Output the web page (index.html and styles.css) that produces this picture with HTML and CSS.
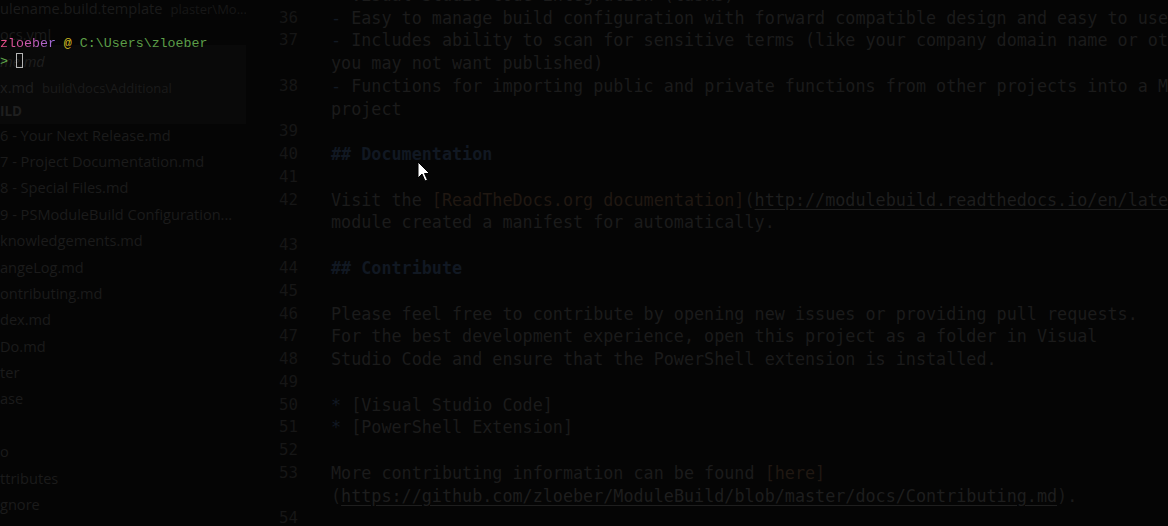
FILE: index.html
```html
<!DOCTYPE html>
<html lang="en">
<head>
<meta charset="utf-8">
<title>ModuleBuild README</title>
<link rel="stylesheet" href="styles.css">
</head>
<body>
<div class="screen">
  <aside class="sidebar">
    <div class="row"><span>ulename.build.template</span><span class="desc">plaster\Mo...</span></div>
    <div class="row">ocs.yml</div>
    <div class="row preview">me.md</div>
    <div class="row"><span>x.md</span><span class="desc">build\docs\Additional</span></div>
    <div class="row section">ILD</div>
    <div class="row">6 - Your Next Release.md</div>
    <div class="row">7 - Project Documentation.md</div>
    <div class="row">8 - Special Files.md</div>
    <div class="row">9 - PSModuleBuild Configuration...</div>
    <div class="row">knowledgements.md</div>
    <div class="row">angeLog.md</div>
    <div class="row">ontributing.md</div>
    <div class="row">dex.md</div>
    <div class="row">Do.md</div>
    <div class="row">ter</div>
    <div class="row">ase</div>
    <div class="row"></div>
    <div class="row">o</div>
    <div class="row">ttributes</div>
    <div class="row">gnore</div>
    <div class="row"></div>
  </aside>

  <main class="editor">
    <div class="line"><span class="ln">35</span><span class="code"><span class="bullet">-</span> Visual Studio Code integration (tasks)</span></div>
    <div class="line"><span class="ln">36</span><span class="code"><span class="bullet">-</span> Easy to manage build configuration with forward compatible design and easy to use</span></div>
    <div class="line"><span class="ln">37</span><span class="code"><span class="bullet">-</span> Includes ability to scan for sensitive terms (like your company domain name or other terms</span></div>
    <div class="line"><span class="ln"></span><span class="code">you may not want published)</span></div>
    <div class="line"><span class="ln">38</span><span class="code"><span class="bullet">-</span> Functions for importing public and private functions from other projects into a ModuleBuild</span></div>
    <div class="line"><span class="ln"></span><span class="code">project</span></div>
    <div class="line"><span class="ln">39</span><span class="code"></span></div>
    <div class="line"><span class="ln">40</span><span class="code heading">## Documentation</span></div>
    <div class="line"><span class="ln">41</span><span class="code"></span></div>
    <div class="line"><span class="ln">42</span><span class="code">Visit the <span class="label">[ReadTheDocs.org documentation]</span>(<span class="url">http://modulebuild.readthedocs.io/en/latest/</span>) for more</span></div>
    <div class="line"><span class="ln"></span><span class="code">module created a manifest for automatically.</span></div>
    <div class="line"><span class="ln">43</span><span class="code"></span></div>
    <div class="line"><span class="ln">44</span><span class="code heading">## Contribute</span></div>
    <div class="line"><span class="ln">45</span><span class="code"></span></div>
    <div class="line"><span class="ln">46</span><span class="code">Please feel free to contribute by opening new issues or providing pull requests.</span></div>
    <div class="line"><span class="ln">47</span><span class="code">For the best development experience, open this project as a folder in Visual</span></div>
    <div class="line"><span class="ln">48</span><span class="code">Studio Code and ensure that the PowerShell extension is installed.</span></div>
    <div class="line"><span class="ln">49</span><span class="code"></span></div>
    <div class="line"><span class="ln">50</span><span class="code"><span class="bullet">*</span> [Visual Studio Code]</span></div>
    <div class="line"><span class="ln">51</span><span class="code"><span class="bullet">*</span> [PowerShell Extension]</span></div>
    <div class="line"><span class="ln">52</span><span class="code"></span></div>
    <div class="line"><span class="ln">53</span><span class="code">More contributing information can be found <span class="label">[here]</span></span></div>
    <div class="line"><span class="ln"></span><span class="code">(<span class="url">https://github.com/zloeber/ModuleBuild/blob/master/docs/Contributing.md</span>).</span></div>
    <div class="line"><span class="ln">54</span><span class="code"></span></div>
  </main>

  <div class="hover-block"></div>

  <div class="terminal">
    <div class="prompt"><span class="user">zloeber</span> <span class="at">@</span> <span class="path">C:\Users\zloeber</span></div>
    <div class="prompt"><span class="chevron">&gt;</span> <span class="cursor"></span></div>
  </div>

  <svg class="pointer" width="14" height="22" viewBox="0 0 14 22" aria-hidden="true">
    <path d="M1 1 L1 17 L5 13 L8 20 L10.5 19 L7.5 12.5 L12.5 12.5 Z" fill="#ffffff" stroke="#000000" stroke-width="1" stroke-linejoin="miter"/>
  </svg>
</div>
</body>
</html>
```

FILE: styles.css
```css
* {
  box-sizing: border-box;
}

html, body {
  margin: 0;
  padding: 0;
  background: #050505;
  overflow: hidden;
}

.screen {
  position: relative;
  width: 1168px;
  height: 526px;
  display: flex;
  overflow: hidden;
  background: #050505;
}

/* ---------- sidebar ---------- */
.sidebar {
  width: 246px;
  flex: 0 0 246px;
  margin-top: -5px;
  font-family: "Open Sans", "Noto Sans", sans-serif;
  font-size: 14.6px;
  color: #1b1b1b;
}

.row {
  height: 26.4px;
  line-height: 26.4px;
  white-space: nowrap;
  overflow: hidden;
  display: flex;
  align-items: baseline;
  gap: 8px;
}

.row .desc {
  font-size: 13px;
  color: #171717;
}

.row.preview {
  font-style: italic;
}

.row.section {
  height: 21px;
  line-height: 21px;
  font-weight: 700;
  font-size: 13.5px;
}

/* ---------- editor ---------- */
.editor {
  flex: 1;
  margin-top: -16.2px;
  font-family: "DejaVu Sans Mono", "Liberation Mono", monospace;
  font-size: 16.76px;
  color: #1b1b1b;
  overflow: hidden;
}

.line {
  display: flex;
  height: 22.77px;
  line-height: 22.77px;
  white-space: nowrap;
}

.ln {
  flex: 0 0 52px;
  text-align: right;
  font-size: 15.8px;
  color: #161616;
}

.code {
  margin-left: 33px;
  white-space: pre;
}

.bullet {
  color: #121923;
}

.heading {
  color: #111822;
  font-weight: 700;
}

.label {
  color: #201812;
}

.url {
  color: #1e1e1e;
  text-decoration: underline;
  text-underline-offset: 3px;
}

/* ---------- overlays ---------- */
.hover-block {
  position: absolute;
  left: 0;
  top: 45px;
  width: 246px;
  height: 79px;
  background: rgba(255, 255, 255, 0.02);
}

.terminal {
  position: absolute;
  left: 0;
  top: 34.5px;
  font-family: "Liberation Mono", "DejaVu Sans Mono", monospace;
  font-size: 13.3px;
  line-height: 18px;
}

.prompt {
  display: block;
  height: 18px;
  white-space: pre;
}

.user {
  background: linear-gradient(90deg, #ee4f86 0%, #c25cb8 60%, #9c6ee0 100%);
  -webkit-background-clip: text;
  background-clip: text;
  color: transparent;
}

.at {
  color: #d2bc22;
}

.path {
  color: #5c9e48;
}

.chevron {
  color: #5fa84a;
}

.cursor {
  display: inline-block;
  width: 7px;
  height: 15px;
  border: 1px solid #b5b5b5;
  vertical-align: -3px;
}

.pointer {
  position: absolute;
  left: 417px;
  top: 161px;
}
```
